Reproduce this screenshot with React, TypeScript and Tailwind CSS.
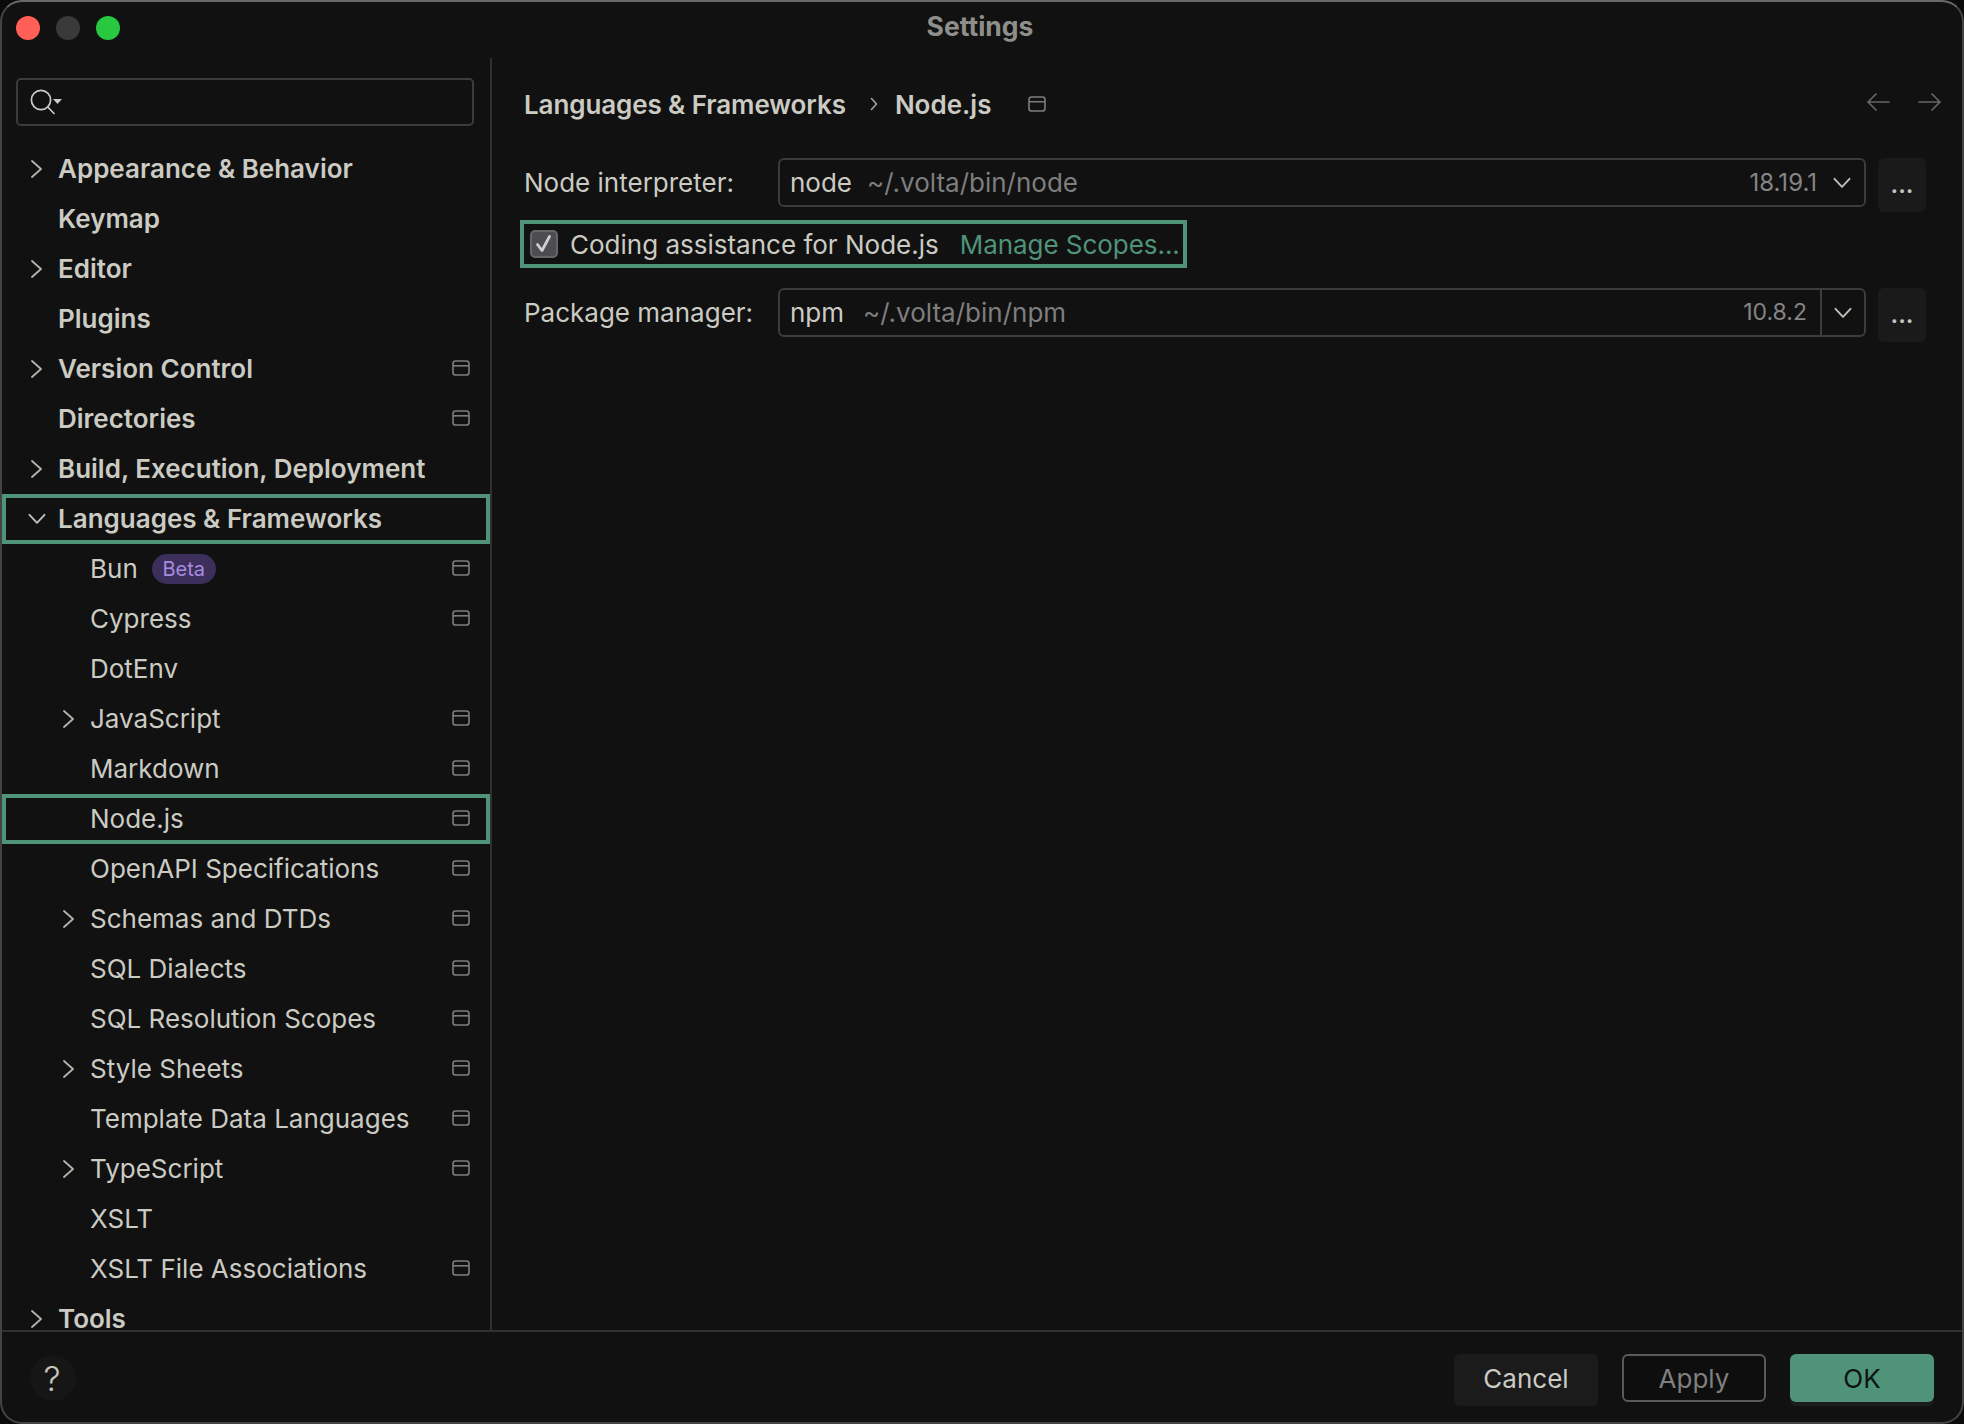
import React from "react";

const font = { fontFamily: "Inter, 'Noto Sans', sans-serif" };

function Chevron({ className = "" }: { className?: string }) {
  return (
    <svg width="14" height="18" viewBox="0 0 14 18" fill="none" className={className}>
      <path d="M2 1 L11 9 L2 17" stroke="#b4b4ac" strokeWidth="1.8" strokeLinecap="round" strokeLinejoin="round" />
    </svg>
  );
}

function ChevronDown({ className = "" }: { className?: string }) {
  return (
    <svg width="18" height="12" viewBox="0 0 18 12" fill="none" className={className}>
      <path d="M1.5 1.8 L9 9.8 L16.5 1.8" stroke="#c0c0b8" strokeWidth="1.9" strokeLinecap="round" strokeLinejoin="round" />
    </svg>
  );
}

function WinIcon() {
  return (
    <svg width="18" height="16" viewBox="0 0 18 16" fill="none" className="shrink-0">
      <rect x="1" y="1" width="16" height="14" rx="2.6" stroke="#7d7d7d" strokeWidth="1.6" />
      <path d="M1 5.8 H17" stroke="#7d7d7d" strokeWidth="1.6" />
    </svg>
  );
}

type Row = { t: string; lvl: 0 | 1; ch?: boolean; open?: boolean; ic?: boolean; sel?: boolean; beta?: boolean };

const rows: Row[] = [
  { t: "Appearance & Behavior", lvl: 0, ch: true },
  { t: "Keymap", lvl: 0 },
  { t: "Editor", lvl: 0, ch: true },
  { t: "Plugins", lvl: 0 },
  { t: "Version Control", lvl: 0, ch: true, ic: true },
  { t: "Directories", lvl: 0, ic: true },
  { t: "Build, Execution, Deployment", lvl: 0, ch: true },
  { t: "Languages & Frameworks", lvl: 0, ch: true, open: true, sel: true },
  { t: "Bun", lvl: 1, ic: true, beta: true },
  { t: "Cypress", lvl: 1, ic: true },
  { t: "DotEnv", lvl: 1 },
  { t: "JavaScript", lvl: 1, ch: true, ic: true },
  { t: "Markdown", lvl: 1, ic: true },
  { t: "Node.js", lvl: 1, ic: true, sel: true },
  { t: "OpenAPI Specifications", lvl: 1, ic: true },
  { t: "Schemas and DTDs", lvl: 1, ch: true, ic: true },
  { t: "SQL Dialects", lvl: 1, ic: true },
  { t: "SQL Resolution Scopes", lvl: 1, ic: true },
  { t: "Style Sheets", lvl: 1, ch: true, ic: true },
  { t: "Template Data Languages", lvl: 1, ic: true },
  { t: "TypeScript", lvl: 1, ch: true, ic: true },
  { t: "XSLT", lvl: 1 },
  { t: "XSLT File Associations", lvl: 1, ic: true },
  { t: "Tools", lvl: 0, ch: true },
];

function TreeRow({ r }: { r: Row }) {
  return (
    <div
      className={
        "flex items-center h-[50px] pr-[20px] shrink-0 " +
        (r.lvl === 0 ? "pl-[27px] font-semibold " : "pl-[59px] font-normal ") +
        (r.sel ? "shadow-[inset_0_0_0_4px_#4f9379]" : "")
      }
    >
      <span className="w-[29px] flex items-center shrink-0">
        {r.ch && (r.open ? <ChevronDown className="-ml-[1px] shrink-0" /> : <Chevron className="ml-[1px] shrink-0" />)}
      </span>
      <span className="whitespace-nowrap pb-[2px]">{r.t}</span>
      {r.beta && (
        <span className="ml-[14px] h-[30px] w-[64px] rounded-full bg-[#3c2f5c] text-[#a98bdf] text-[20px] flex items-center justify-center">
          Beta
        </span>
      )}
      {r.ic && (
        <span className="ml-auto flex mb-[2px]">
          <WinIcon />
        </span>
      )}
    </div>
  );
}

function Combo({
  name,
  path,
  ver,
  split,
  gap,
}: {
  name: string;
  path: string;
  ver: string;
  split?: boolean;
  gap: string;
}) {
  return (
    <div className="flex items-center w-[1088px] h-[49px] rounded-[6px] border-2 border-[#3c3c3c] pl-[10px]">
      <span className="text-[#cbcbc3]">{name}</span>
      <span className={"text-[#7e7e7e] " + gap}>{path}</span>
      <span className={"ml-auto text-[#858585] " + (split ? "text-[23px] mr-[13px]" : "text-[24px] mr-[3px]")}>{ver}</span>
      <span
        className={
          "flex items-center justify-center w-[44px] h-full shrink-0 " + (split ? "border-l-2 border-[#3c3c3c]" : "")
        }
      >
        <ChevronDown />
      </span>
    </div>
  );
}

function Dots() {
  return (
    <div className="ml-[12px] w-[48px] h-[54px] self-start rounded-[6px] bg-[#1a1a1a] flex items-center justify-center text-[#c5c5bd] text-[24px] font-semibold">
      ...
    </div>
  );
}

export default function App() {
  return (
    <div className="w-[1964px] h-[1424px] bg-[#0b0b0b] text-[26px] text-[#cbcbc3]" style={font}>
      <div className="w-full h-full flex flex-col border-2 border-[#444444] border-t-[#6a6a6a] rounded-[22px] bg-[#111111] overflow-hidden">
        <header className="relative h-[56px] shrink-0 flex items-center justify-center pb-[6px] pr-[4px]">
          <div className="absolute left-[14px] top-[14px] flex gap-[16px]">
            <span className="w-[24px] h-[24px] rounded-full bg-[#ff5f57]" />
            <span className="w-[24px] h-[24px] rounded-full bg-[#3a3a3a]" />
            <span className="w-[24px] h-[24px] rounded-full bg-[#28c840]" />
          </div>
          <span className="text-[#8e8e8a] font-bold text-[26.5px]">Settings</span>
        </header>

        <div className="flex flex-1 min-h-0">
          <aside className="w-[490px] shrink-0 border-r-2 border-[#303030] flex flex-col overflow-hidden">
            <div className="mt-[20px] ml-[14px] w-[458px] h-[48px] shrink-0 rounded-[5px] border-2 border-[#3c3c3c] flex items-center pl-[12px]">
              <svg width="34" height="28" viewBox="0 0 34 28" fill="none">
                <circle cx="11" cy="12" r="9.6" stroke="#c9c9c9" strokeWidth="1.7" />
                <path d="M17.8 19 L24 25.5" stroke="#c9c9c9" strokeWidth="1.7" strokeLinecap="round" />
                <path d="M23 11 H32 L27.5 16 Z" fill="#c9c9c9" />
              </svg>
            </div>
            <div className="mt-[18px] flex flex-col">
              {rows.map((r) => (
                <TreeRow key={r.t} r={r} />
              ))}
            </div>
          </aside>

          <main className="flex-1 min-w-0 flex flex-col pl-[32px] pr-[20px] pt-[25px]">
            <div className="flex items-center h-[42px] shrink-0">
              <span className="font-semibold tracking-[-0.1px]">Languages & Frameworks</span>
              <svg width="12" height="16" viewBox="0 0 12 16" fill="none" className="ml-[22px] mr-[15px]">
                <path d="M3.5 2.5 L8.5 8 L3.5 13.5" stroke="#a5a59f" strokeWidth="1.6" strokeLinecap="round" strokeLinejoin="round" />
              </svg>
              <span className="font-semibold">Node.js</span>
              <span className="ml-[37px] flex">
                <WinIcon />
              </span>
              <div className="ml-auto flex gap-[28px] mb-[4px]">
                <svg width="24" height="20" viewBox="0 0 24 20" fill="none">
                  <path d="M23 10 H2 M10 2 L2 10 L10 18" stroke="#666" strokeWidth="1.7" strokeLinecap="round" strokeLinejoin="round" />
                </svg>
                <svg width="24" height="20" viewBox="0 0 24 20" fill="none">
                  <path d="M1 10 H22 M14 2 L22 10 L14 18" stroke="#666" strokeWidth="1.7" strokeLinecap="round" strokeLinejoin="round" />
                </svg>
              </div>
            </div>

            <div className="flex items-start mt-[33px] shrink-0">
              <span className="w-[254px] h-[49px] flex items-center shrink-0">Node interpreter:</span>
              <Combo name="node" path="~/.volta/bin/node" ver="18.19.1" gap="ml-[15px]" />
              <Dots />
            </div>

            <div className="flex items-center w-[667px] h-[48px] -ml-[4px] mt-[8px] pl-[10px] shrink-0 shadow-[inset_0_0_0_4px_#4f9379]">
              <span className="w-[28px] h-[28px] rounded-[5px] bg-[#4d4d50] border-2 border-[#66666a] flex items-center justify-center shrink-0">
                <svg width="20" height="20" viewBox="0 0 20 20" fill="none">
                  <path d="M3.5 10.5 L8 16.5 L15.5 2.5" stroke="#cfcfcf" strokeWidth="2.8" strokeLinecap="round" strokeLinejoin="round" />
                </svg>
              </span>
              <span className="ml-[12px] whitespace-nowrap">Coding assistance for Node.js</span>
              <span className="ml-[21px] text-[#4f9379] whitespace-nowrap tracking-[-0.05px]">Manage Scopes...</span>
            </div>

            <div className="flex items-start mt-[20px] shrink-0">
              <span className="w-[254px] h-[49px] flex items-center shrink-0">Package manager:</span>
              <Combo name="npm" path="~/.volta/bin/npm" ver="10.8.2" split gap="ml-[19px]" />
              <Dots />
            </div>
          </main>
        </div>

        <footer className="h-[92px] shrink-0 border-t-2 border-[#303030] flex items-start pt-[22px] pl-[28px] pr-[28px]">
          <div className="mt-[1px] w-[46px] h-[46px] rounded-full bg-[#161616] flex items-center justify-center text-[#c5c5bd] text-[34px] font-light pr-[2px]">
            ?
          </div>
          <div className="ml-auto h-[52px] w-[144px] rounded-[6px] bg-[#1b1b1b] flex items-center justify-center pb-[4px]">Cancel</div>
          <div className="ml-[24px] h-[48px] w-[144px] rounded-[6px] border-2 border-[#5a5a5a] bg-[#0e0e0e] text-[#7f7f7f] flex items-center justify-center">Apply</div>
          <div className="ml-[24px] h-[48px] w-[144px] rounded-[6px] bg-[#4f9379] text-[#0d1512] flex items-center justify-center shadow-[0_4px_0_#1c1c1c]">OK</div>
        </footer>
      </div>
    </div>
  );
}
